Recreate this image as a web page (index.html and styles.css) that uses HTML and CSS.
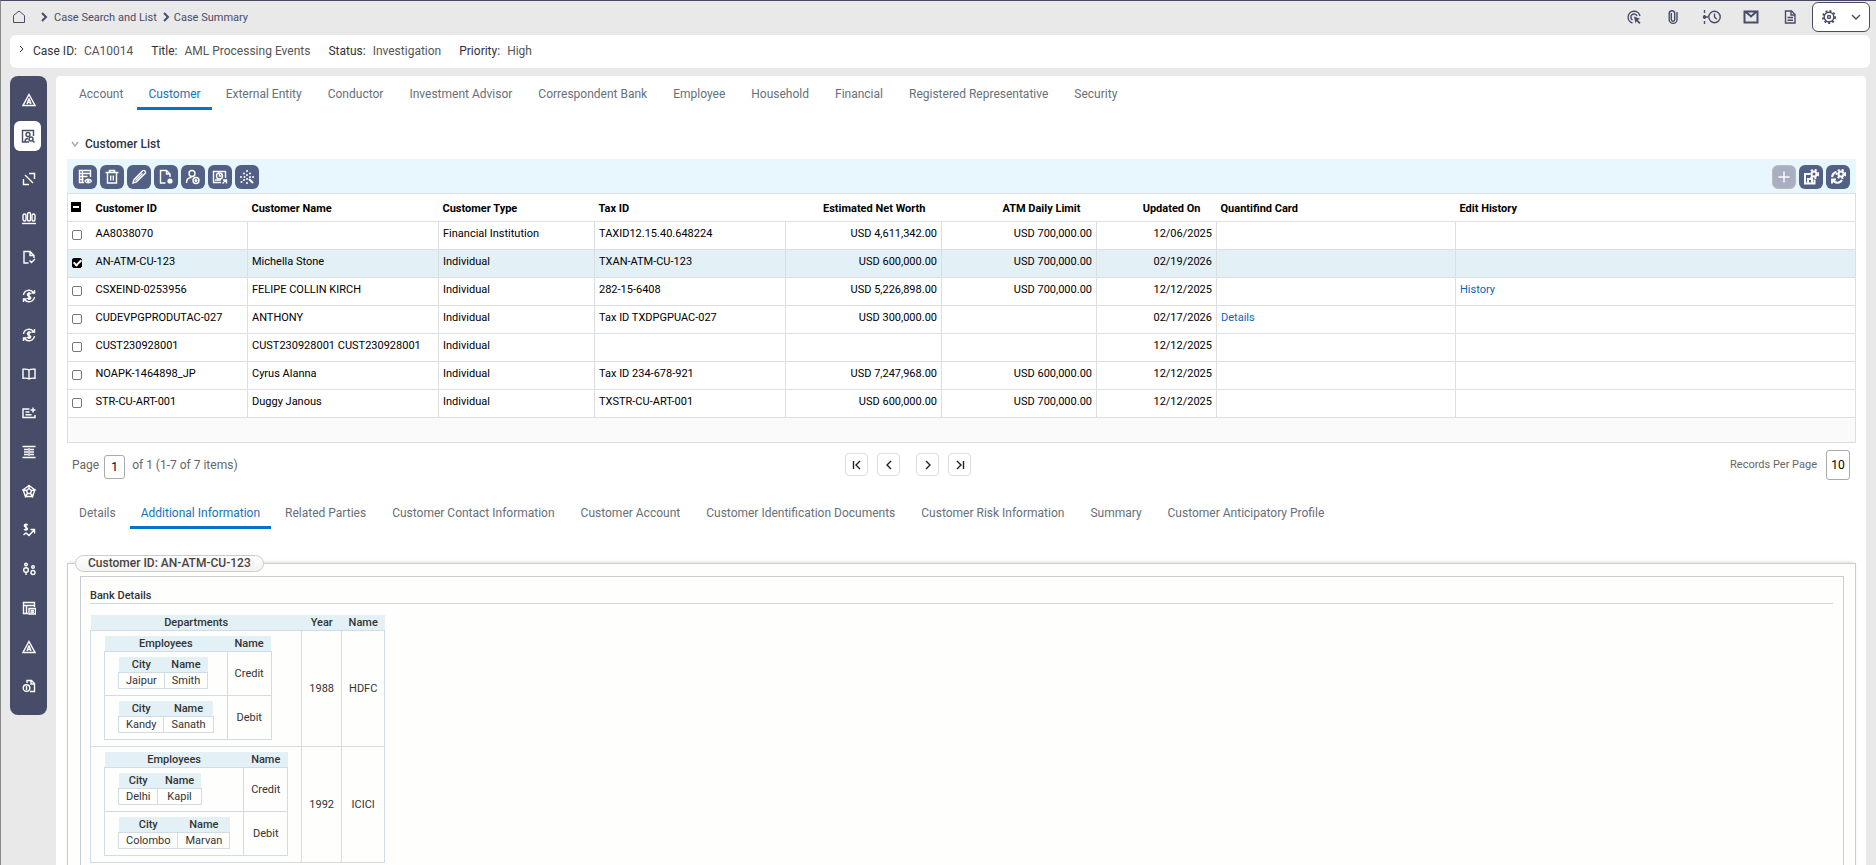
FILE: index.html
```html
<!DOCTYPE html>
<html lang="en">
<head>
  <meta charset="UTF-8">
  <meta name="viewport" content="width=device-width, initial-scale=1.0">
  <title>Case Summary</title>
  <link rel="stylesheet" href="styles.css">
</head>
<body>
<div class="app">

<header class="topbar">
  <nav class="breadcrumb" aria-label="Breadcrumb">
    <a href="#" class="home" aria-label="Home"><svg class="icon" viewBox="0 0 16 16"><path d="M2.500 6.500 8 2l5.500 4.500v7h-11z"/></svg></a>
    <svg class="sep" viewBox="0 0 8 10"><path d="M2 1l4 4-4 4"/></svg>
    <a href="#">Case Search and List</a>
    <svg class="sep" viewBox="0 0 8 10"><path d="M2 1l4 4-4 4"/></svg>
    <a href="#">Case Summary</a>
  </nav>
  <div class="actions">
    <button aria-label="Actions"><svg class="icon" viewBox="0 0 16 16"><path d="M6.500 14A6 6 0 1 1 14 7M6.500 11A3.200 3.200 0 1 1 11 7"/><path class="solid" d="M8 7.500l6 2.300-2.200 1.200 2.700 2.700-1.200 1.300-2.700-2.700L9.500 14.500z"/></svg></button>
    <button aria-label="Attachments"><svg class="icon" viewBox="0 0 16 16"><path d="M6.300 4v6.500a1.700 1.700 0 0 0 3.400 0V4a2.800 2.800 0 0 0-5.500 0v6.500a3.900 3.900 0 0 0 7.800 0V3"/></svg></button>
    <button aria-label="Timeline"><svg class="icon wide" viewBox="0 0 20 16"><path d="M2.500 1v3M2.500 12v3M2.500 6v4M3 8h3"/><circle cx="2.500" cy="8" r="1"/><circle cx="12.500" cy="8" r="5.700"/><path d="M12.500 4.500V8l2.300 2.300"/></svg></button>
    <button aria-label="Mail"><svg class="icon" viewBox="0 0 16 16"><path class="thick" d="M1.500 2.500h13v11h-13zM3 3l5 4.500L13 3"/></svg></button>
    <button aria-label="Documents"><svg class="icon" viewBox="0 0 16 16"><path d="M3.500 2h6l3.500 3.500V14H3.500zM5.500 8.500h5.500M5.500 11.200h5.500"/><path d="M9 2v4h4"/></svg></button>
    <button class="settings" aria-label="Settings">
      <svg class="icon" viewBox="0 0 16 16"><circle cx="8" cy="8" r="4.800"/><circle cx="8" cy="8" r="1.500"/><circle class="teeth" cx="8" cy="8" r="6"/></svg>
      <svg class="caret" viewBox="0 0 10 6"><path d="M1 1l4 4 4-4"/></svg>
    </button>
  </div>
</header>

<section class="case-bar">
  <button class="expand" aria-label="Expand"><svg viewBox="0 0 5 8"><path d="M1 1l3 3-3 3"/></svg></button>
  <dl>
    <div><dt>Case ID:</dt><dd>CA10014</dd></div>
    <div><dt>Title:</dt><dd>AML Processing Events</dd></div>
    <div><dt>Status:</dt><dd>Investigation</dd></div>
    <div><dt>Priority:</dt><dd>High</dd></div>
  </dl>
</section>

<div class="body">
  <nav class="sidebar" aria-label="Case sections">
    <a href="#" aria-label="Alerts"><svg viewBox="0 0 14 14"><path d="M7 1.500 13 12.500H1z"/><path d="M7 5.500 5 11M7 5.500l2 5.500M5.500 9.500h3"/></svg></a>
    <a href="#" class="active" aria-label="Entities"><svg viewBox="0 0 14 14"><path d="M8 13H1.500V1.500h11V7M4 13c0-2 1-3.500 3-3.500"/><circle cx="7" cy="5.500" r="2"/><circle cx="10" cy="10" r="2"/><path d="M11.500 11.500l2 2"/></svg></a>
    <a href="#" aria-label="Transactions"><svg viewBox="0 0 14 14"><path d="M7 1.500h5.500V7M7 12.500H1.500V7M3 3l8 8"/></svg></a>
    <a href="#" aria-label="Network"><svg viewBox="0 0 14 14"><path d="M0 12.500h14"/><rect x="1" y="3" width="3" height="7" rx="1.500"/><rect x="5.500" y="1.500" width="3" height="8.500" rx="1.500"/><rect x="10" y="3" width="3" height="7" rx="1.500"/></svg></a>
    <a href="#" aria-label="Evidence"><svg viewBox="0 0 14 14"><path d="M6.500 13H2V1.500h6l4 4V8M8 1.500v4h4M7.500 10.500l2 2 3.500-3.500"/></svg></a>
    <a href="#" aria-label="Financials"><svg viewBox="0 0 14 14"><path d="M1.500 6a5.600 5.600 0 0 1 10-2.500M12.500 8a5.600 5.600 0 0 1-10 2.500M12.500 1v3h-3M1.500 13v-3h3M9 5C7 3.500 5 4.500 5.500 6S9 7.500 8.700 9 6 10 5 9M7 3v8"/></svg></a>
    <a href="#" aria-label="Recovery"><svg viewBox="0 0 14 14"><path d="M1.500 6a5.600 5.600 0 0 1 10-2.500M12.500 8a5.600 5.600 0 0 1-10 2.500M12.500 1v3h-3M1.500 13v-3h3M9 5C7 3.500 5 4.500 5.500 6S9 7.500 8.700 9 6 10 5 9M7 3v8"/></svg></a>
    <a href="#" aria-label="Narrative"><svg viewBox="0 0 14 14"><path d="M7 3v9M7 3C5.500 2 3 2 1 2.200v9C3 11 5.500 11 7 12c1.500-1 4-1 6-.8v-9C11 2 8.500 2 7 3z"/></svg></a>
    <a href="#" aria-label="Summary"><svg viewBox="0 0 14 14"><path d="M7.500 3H1v8.500h12V9M3.500 6h4M3.500 8.700h6M11 1.500v5M8.500 4h5"/></svg></a>
    <a href="#" aria-label="Lists"><svg viewBox="0 0 14 14"><path d="M.5 1.500h13M.5 12.500h13M2 4.500h4M8 4.500h4M2 7h4M8 7h4M2 9.500h4M8 9.500h4M7 3v8"/></svg></a>
    <a href="#" aria-label="Ratings"><svg viewBox="0 0 14 14"><path d="M7 1.500 12.800 5.800 10.600 12.500H3.400L1.200 5.800zM7 4.500l2.500 2-1 3h-3l-1-3zM7 1.500v3M12.800 5.800l-3.300.7M10.600 12.500l-2-3M3.400 12.500l2-3M1.200 5.800l3.300.7"/><path class="thick" d="M7 1v1M1 5.500v1M13 5.500v1M3 12.500h1M10 12.500h1"/></svg></a>
    <a href="#" aria-label="Trends"><svg viewBox="0 0 14 14"><path d="M6 2C4 .8 2 1.500 2.500 3S6 4.500 5.500 6 3 7 2 6.200M4 .5V7.500M1.500 12l2.500-2 3 2.500L12 7M8.500 6.500H12.500v4"/></svg></a>
    <a href="#" aria-label="Related people"><svg viewBox="0 0 14 14"><circle cx="4" cy="2.500" r="1.300"/><circle cx="4" cy="8" r="2.300"/><path d="M4 10v3"/><circle cx="11" cy="5" r="1.300"/><circle cx="11" cy="10.500" r="2"/></svg></a>
    <a href="#" aria-label="Records"><svg viewBox="0 0 14 14"><path d="M6 12.500H1.500v-11h11V6M1.500 4.500h11M4.500 4.500v8"/><path d="M7 7.500h6.500v5.500H7zM8.500 9.500h3.500M8.500 11.300h3.500"/></svg></a>
    <a href="#" aria-label="Related alerts"><svg viewBox="0 0 14 14"><path d="M7 1.500 13 12.500H1z"/><path d="M7 5.500 5 11M7 5.500l2 5.500M5.500 9.500h3"/></svg></a>
    <a href="#" aria-label="Audit"><svg viewBox="0 0 14 14"><path d="M5 4V1.500h4.500L12.500 4.500v8H8M9 1.500V5h3.500"/><circle cx="4.500" cy="9" r="3.300"/><path d="M4.500 7v4"/></svg></a>
  </nav>

  <main class="panel">
    <nav class="tabs" aria-label="Entity types">
      <a href="#">Account</a>
      <a href="#" class="active">Customer</a>
      <a href="#">External Entity</a>
      <a href="#">Conductor</a>
      <a href="#">Investment Advisor</a>
      <a href="#">Correspondent Bank</a>
      <a href="#">Employee</a>
      <a href="#">Household</a>
      <a href="#">Financial</a>
      <a href="#">Registered Representative</a>
      <a href="#">Security</a>
    </nav>

    <h2 class="list-title"><svg viewBox="0 0 8 6"><path d="M1 1l3 4 3-4"/></svg>Customer List</h2>

    <div class="toolbar">
      <button aria-label="View"><svg viewBox="0 0 16 16"><path d="M7 13.500H2.500v-12h11V8M2.500 4.500h11M2.500 7.500h8M2.500 10.500h4M5.500 2v11"/><path d="M8 12c1.500-2.500 5-2.500 6.500 0-1.500 2.500-5 2.500-6.500 0z"/><circle cx="11.200" cy="12" r=".8"/></svg></button>
      <button aria-label="Delete"><svg viewBox="0 0 16 16"><path d="M1.500 3.500h13M5.500 3.500V1.500h5v2M3.500 4v10h9V4M6.700 6.500v5M9.300 6.500v5"/></svg></button>
      <button aria-label="Edit"><svg viewBox="0 0 16 16"><path d="M2 14l1-3.500L11.500 2a1.700 1.700 0 0 1 2.500 2.500L5.500 13zM4.500 11.500l7-7"/></svg></button>
      <button aria-label="Add document"><svg viewBox="0 0 16 16"><path d="M7.500 14H2.500V1.500h6L12 5v3M8.500 1.500V5H12"/><circle class="solid" cx="12" cy="12" r="2.600"/></svg></button>
      <button aria-label="Link customer"><svg viewBox="0 0 16 16"><circle cx="7" cy="4.500" r="3"/><path d="M1.500 14c0-3.500 2-5.500 5-5.500"/><circle cx="11" cy="11.500" r="3"/><path d="M9.500 11.500h3M11 10v3"/></svg></button>
      <button aria-label="Open profile"><svg viewBox="0 0 16 16"><path d="M9 13.500H1.500v-11h12V9M3 11h6"/><circle cx="7.500" cy="7" r="3"/><path d="M7.500 5v2h2M10.500 14.500l3.500-3.500M11 11h3.500v3.500"/></svg></button>
      <button aria-label="Network graph"><svg viewBox="0 0 16 16"><path class="dots" d="M8 2v.1M5 4.500v.1M11 4.500v.1M2 8v.1M5.500 8v.1M8 6v.1M11 8v.1M14 8v.1M5 11v.1M8 10v.1M8 14v.1M2.500 13v.1"/><path class="thick" d="M10 10l4 4"/></svg></button>
      <span class="spacer"></span>
      <button class="disabled" disabled aria-label="Add"><svg viewBox="0 0 16 16"><path d="M8 2.500v11M2.500 8h11"/></svg></button>
      <button aria-label="Save settings"><svg viewBox="0 0 16 16"><path class="thick" d="M6 5H2v9.500h9.500V10.500M5 14v-4h4v4"/><circle class="thick" cx="11" cy="5" r="2.500"/><circle class="teeth" cx="11" cy="5" r="4.200"/></svg></button>
      <button aria-label="Refresh settings"><svg viewBox="0 0 16 16"><path class="thick" d="M2 8c.5-3 2-4.500 4.500-5M12 11c-2 3.500-6.500 3.500-9 .5M2 14.500v-4h4"/><circle class="thick" cx="11" cy="5" r="2.500"/><circle class="teeth" cx="11" cy="5" r="4.200"/></svg></button>
    </div>

    <table class="grid">
      <colgroup>
        <col class="c-check"><col class="c-id"><col class="c-name"><col class="c-type"><col class="c-tax">
        <col class="c-worth"><col class="c-limit"><col class="c-date"><col class="c-card"><col>
      </colgroup>
      <thead>
        <tr>
          <th><input type="checkbox" class="mixed" aria-label="Select all"></th>
          <th>Customer ID</th><th>Customer Name</th><th>Customer Type</th><th>Tax ID</th>
          <th class="num">Estimated Net Worth</th><th class="num">ATM Daily Limit</th><th class="num">Updated On</th>
          <th>Quantifind Card</th><th>Edit History</th>
        </tr>
      </thead>
      <tbody>
        <tr>
          <td><input type="checkbox" aria-label="Select AA8038070"></td>
          <td>AA8038070</td><td></td><td>Financial Institution</td><td>TAXID12.15.40.648224</td>
          <td class="num">USD 4,611,342.00</td><td class="num">USD 700,000.00</td><td class="num">12/06/2025</td><td></td><td></td>
        </tr>
        <tr class="selected">
          <td><input type="checkbox" checked aria-label="Select AN-ATM-CU-123"></td>
          <td>AN-ATM-CU-123</td><td>Michella Stone</td><td>Individual</td><td>TXAN-ATM-CU-123</td>
          <td class="num">USD 600,000.00</td><td class="num">USD 700,000.00</td><td class="num">02/19/2026</td><td></td><td></td>
        </tr>
        <tr>
          <td><input type="checkbox" aria-label="Select CSXEIND-0253956"></td>
          <td>CSXEIND-0253956</td><td>FELIPE COLLIN KIRCH</td><td>Individual</td><td>282-15-6408</td>
          <td class="num">USD 5,226,898.00</td><td class="num">USD 700,000.00</td><td class="num">12/12/2025</td><td></td><td><a href="#">History</a></td>
        </tr>
        <tr>
          <td><input type="checkbox" aria-label="Select CUDEVPGPRODUTAC-027"></td>
          <td>CUDEVPGPRODUTAC-027</td><td>ANTHONY</td><td>Individual</td><td>Tax ID TXDPGPUAC-027</td>
          <td class="num">USD 300,000.00</td><td></td><td class="num">02/17/2026</td><td><a href="#">Details</a></td><td></td>
        </tr>
        <tr>
          <td><input type="checkbox" aria-label="Select CUST230928001"></td>
          <td>CUST230928001</td><td>CUST230928001 CUST230928001</td><td>Individual</td><td></td>
          <td></td><td></td><td class="num">12/12/2025</td><td></td><td></td>
        </tr>
        <tr>
          <td><input type="checkbox" aria-label="Select NOAPK-1464898_JP"></td>
          <td>NOAPK-1464898_JP</td><td>Cyrus Alanna</td><td>Individual</td><td>Tax ID 234-678-921</td>
          <td class="num">USD 7,247,968.00</td><td class="num">USD 600,000.00</td><td class="num">12/12/2025</td><td></td><td></td>
        </tr>
        <tr>
          <td><input type="checkbox" aria-label="Select STR-CU-ART-001"></td>
          <td>STR-CU-ART-001</td><td>Duggy Janous</td><td>Individual</td><td>TXSTR-CU-ART-001</td>
          <td class="num">USD 600,000.00</td><td class="num">USD 700,000.00</td><td class="num">12/12/2025</td><td></td><td></td>
        </tr>
      </tbody>
    </table>
    <div class="grid-foot"></div>

    <div class="pager">
      <div class="page-no">
        <label for="page">Page</label>
        <input id="page" type="text" value="1">
        <span>of 1 (1-7 of 7 items)</span>
      </div>
      <div class="page-nav">
        <button aria-label="First page"><svg viewBox="0 0 10 10"><path d="M1.500 1v8M8 1L4 5l4 4"/></svg></button>
        <button aria-label="Previous page"><svg viewBox="0 0 10 10"><path d="M7 1L3 5l4 4"/></svg></button>
        <button class="next" aria-label="Next page"><svg viewBox="0 0 10 10"><path d="M3 1l4 4-4 4"/></svg></button>
        <button aria-label="Last page"><svg viewBox="0 0 10 10"><path d="M2 1l4 4-4 4M8.500 1v8"/></svg></button>
      </div>
      <div class="per-page">
        <label for="perPage">Records Per Page</label>
        <input id="perPage" type="text" value="10">
      </div>
    </div>

    <nav class="tabs sub" aria-label="Customer sections">
      <a href="#">Details</a>
      <a href="#" class="active">Additional Information</a>
      <a href="#">Related Parties</a>
      <a href="#">Customer Contact Information</a>
      <a href="#">Customer Account</a>
      <a href="#">Customer Identification Documents</a>
      <a href="#">Customer Risk Information</a>
      <a href="#">Summary</a>
      <a href="#">Customer Anticipatory Profile</a>
    </nav>

    <fieldset class="customer-box">
      <legend>Customer ID: AN-ATM-CU-123</legend>
      <section class="bank">
        <h3>Bank Details</h3>
        <table class="nested">
          <tr><th>Departments</th><th>Year</th><th>Name</th></tr>
          <tr>
            <td class="holder">
              <table class="nested">
                <tr><th>Employees</th><th>Name</th></tr>
                <tr>
                  <td class="holder">
                    <table class="nested">
                      <tr><th>City</th><th>Name</th></tr>
                      <tr><td>Jaipur</td><td>Smith</td></tr>
                    </table>
                  </td>
                  <td>Credit</td>
                </tr>
                <tr>
                  <td class="holder">
                    <table class="nested">
                      <tr><th>City</th><th>Name</th></tr>
                      <tr><td>Kandy</td><td>Sanath</td></tr>
                    </table>
                  </td>
                  <td>Debit</td>
                </tr>
              </table>
            </td>
            <td>1988</td>
            <td>HDFC</td>
          </tr>
          <tr>
            <td class="holder">
              <table class="nested">
                <tr><th>Employees</th><th>Name</th></tr>
                <tr>
                  <td class="holder">
                    <table class="nested">
                      <tr><th>City</th><th>Name</th></tr>
                      <tr><td>Delhi</td><td>Kapil</td></tr>
                    </table>
                  </td>
                  <td>Credit</td>
                </tr>
                <tr>
                  <td class="holder">
                    <table class="nested">
                      <tr><th>City</th><th>Name</th></tr>
                      <tr><td>Colombo</td><td>Marvan</td></tr>
                    </table>
                  </td>
                  <td>Debit</td>
                </tr>
              </table>
            </td>
            <td>1992</td>
            <td>ICICI</td>
          </tr>
        </table>
      </section>
    </fieldset>
  </main>
</div>

</div>
</body>
</html>
```
FILE: styles.css
```css
* {
  box-sizing: border-box;
}

body {
  margin: 0;
  font-family: Roboto, 'Open Sans', sans-serif;
  font-size: 12px;
  color: #333;
  background: #e9e9e9;
}

a {
  color: inherit;
  text-decoration: none;
}

button {
  padding: 0;
  border: none;
  background: none;
  color: inherit;
  font: inherit;
  cursor: pointer;
}

svg {
  display: block;
  fill: none;
  stroke: currentColor;
  stroke-width: 1.4;
}

svg .solid {
  fill: currentColor;
  stroke: none;
}

svg .thick {
  stroke-width: 2;
}

svg .teeth {
  stroke-width: 2;
  stroke-dasharray: 2 2;
}

svg .dots {
  stroke-width: 2;
  stroke-linecap: round;
}

.app {
  display: flex;
  flex-direction: column;
  height: 100vh;
  overflow: hidden;
  border-top: 1px solid #474864;
  border-left: 1px solid #8a8a8a;
}

/* top bar */
.topbar {
  display: flex;
  align-items: center;
  justify-content: space-between;
  height: 34px;
  flex-shrink: 0;
  padding: 0 6px 2px 10px;
  color: #474c69;
}

.breadcrumb {
  display: flex;
  align-items: center;
  font-size: 11px;
}

.breadcrumb .sep {
  width: 8px;
  height: 10px;
  margin: 0 4px 0 5px;
  stroke-width: 2;
}

.breadcrumb .home + .sep {
  margin: 0 6px 0 13px;
}

.home svg {
  stroke-width: 1;
}

.icon {
  width: 16px;
  height: 16px;
}

.icon.wide {
  width: 20px;
}

.actions {
  display: flex;
  align-items: center;
}

.actions button {
  display: flex;
  justify-content: center;
  width: 39px;
}

.actions .settings {
  align-items: center;
  justify-content: space-between;
  width: 58px;
  height: 30px;
  margin-left: 3px;
  padding: 0 8px;
  border: 1px solid #474c69;
  border-radius: 6px;
  background: #fff;
}

.caret {
  width: 10px;
  height: 6px;
}

/* case bar */
.case-bar {
  display: flex;
  align-items: center;
  height: 33px;
  flex-shrink: 0;
  margin: 0 6px 8px 9px;
  padding: 0 0 1px 9px;
  border-radius: 6px;
  background: #fff;
}

.expand {
  margin: 0 9px 5px 0;
}

.expand svg {
  width: 5px;
  height: 8px;
  stroke-width: 1;
}

.case-bar dl {
  display: flex;
  gap: 18px;
  margin: 0;
}

.case-bar dl div {
  display: flex;
  gap: 7px;
}

.case-bar dd {
  margin: 0;
  color: #555;
}

/* body */
.body {
  display: flex;
  align-items: flex-start;
  flex: 1;
  min-height: 0;
  gap: 9px;
  padding: 0 10px 0 9px;
}

.sidebar {
  display: flex;
  flex-direction: column;
  width: 37px;
  padding: 4px 0 10px;
  border-radius: 8px;
  background: #474c69;
  color: #fff;
}

.sidebar a {
  display: flex;
  align-items: center;
  justify-content: center;
  height: 39px;
}

.sidebar svg {
  width: 14px;
  height: 14px;
}

.sidebar .active {
  height: 30px;
  margin: 2px 6px 8px 4px;
  border-radius: 6px;
  background: #fff;
  color: #474c69;
}

.panel {
  flex: 1;
  align-self: stretch;
  min-width: 0;
  overflow: auto;
  scrollbar-width: none;
  padding: 0 10px 20px 11px;
  border-radius: 4px 4px 0 0;
  background: #fff;
}

/* tabs */
.tabs {
  display: flex;
  gap: 3px;
}

.tabs a {
  height: 34px;
  padding: 0 11px;
  line-height: 36px;
  color: #677078;
}

.tabs a:first-child {
  padding-left: 12px;
}

.tabs a:nth-child(n + 3) {
  padding-right: 12px;
}

.tabs .active {
  color: #1672c0;
  border-bottom: 3px solid #0572ce;
}

.list-title {
  display: flex;
  align-items: center;
  gap: 6px;
  height: 30px;
  margin: 19px 0 0;
  padding-left: 4px;
  font-size: 12px;
  font-weight: 500;
  color: #2f3446;
}

.list-title svg {
  width: 8px;
  height: 6px;
  color: #aaa;
}

/* customer table */
.toolbar {
  display: flex;
  align-items: center;
  gap: 3px;
  height: 34px;
  padding: 2px 6px 0;
  background: #e8f6fe;
}

.toolbar button {
  display: flex;
  align-items: center;
  justify-content: center;
  width: 24px;
  height: 24px;
  border-radius: 6px;
  background: #536086;
  color: #fff;
}

.toolbar svg {
  width: 16px;
  height: 16px;
}

.toolbar .disabled {
  border: 1px solid #bbb;
  background: #a9aec3;
}

.spacer {
  flex: 1;
}

.grid {
  width: 100%;
  table-layout: fixed;
  border-collapse: collapse;
  font-size: 11px;
  color: #000;
}

.c-check { width: 25px; }
.c-id { width: 155px; }
.c-name { width: 191px; }
.c-type { width: 156px; }
.c-tax { width: 191px; }
.c-worth { width: 156px; }
.c-limit { width: 155px; }
.c-date { width: 120px; }
.c-card { width: 239px; }

.grid thead {
  border: 1px solid #dcdfe1;
}

.grid th {
  height: 28px;
  padding: 2px 4px 0;
  font-weight: 700;
  text-align: left;
}

.grid td {
  height: 28px;
  padding: 0 4px 4px;
  border: 1px solid #dcdfe1;
  white-space: nowrap;
}

.grid td:first-child {
  padding: 0 4px 2px;
  border-right: none;
}

.grid td:nth-child(2),
.grid th:nth-child(2) {
  border-left: none;
  padding-left: 3px;
}

.grid th:first-child {
  padding: 0 3px 2px;
}

.grid .num {
  text-align: right;
}

.grid th.num {
  padding-right: 16px;
}

.grid a {
  color: #0a66b7;
}

.grid .selected {
  background: #e3f0f6;
}

.grid input {
  display: grid;
  place-content: center;
  appearance: none;
  width: 10px;
  height: 10px;
  margin: 0;
  border: 1px solid #777;
  border-radius: 2px;
  background: #fff;
}

.grid input:checked,
.grid .mixed {
  border-color: #000;
  background: #000;
}

.grid .mixed {
  border-radius: 0;
}

.grid input:checked::before {
  content: "";
  width: 3px;
  height: 6px;
  margin-bottom: 2px;
  border: solid #fff;
  border-width: 0 2px 2px 0;
  transform: rotate(45deg);
}

.grid .mixed::before {
  content: "";
  width: 6px;
  height: 2px;
  background: #fff;
}

.grid-foot {
  height: 25px;
  border: 1px solid #dcdfe1;
  border-top: none;
  background: #fafafa;
}

/* paging */
.pager {
  display: grid;
  grid-template-columns: 1fr auto 1fr;
  align-items: center;
  height: 43px;
  padding: 0 6px 0 5px;
  color: #666;
}

.page-no,
.page-nav,
.per-page {
  display: flex;
  align-items: center;
}

.pager input {
  width: 21px;
  height: 24px;
  margin: 4px 7px 0 5px;
  padding: 0;
  border: 1px solid #aaa;
  border-radius: 3px;
  font: inherit;
  color: #000;
  text-align: center;
}

.page-nav {
  gap: 9px;
  margin-right: 106px;
}

.page-nav button {
  display: flex;
  align-items: center;
  justify-content: center;
  width: 23px;
  height: 23px;
  border: 1px solid #ddd;
  border-radius: 4px;
  color: #222;
}

.page-nav .next {
  margin-left: 7px;
}

.page-nav svg {
  width: 10px;
  height: 10px;
}

.per-page {
  justify-content: flex-end;
  font-size: 11px;
}

.pager .per-page input {
  width: 24px;
  height: 30px;
  margin: 0 0 0 9px;
  font-size: 12px;
}

.tabs.sub {
  margin-top: 9px;
}

/* customer details */
.customer-box {
  min-width: 0;
  margin: 26px 0 0;
  padding: 4px 11px 12px 12px;
  border: 1px solid #ccc;
  background: #fefefc;
  box-shadow: 0 -2px 4px -2px #ccc;
}

.customer-box legend {
  margin-left: -5px;
  padding: 0 12px;
  border: 1px solid #ccc;
  border-radius: 9px;
  background: linear-gradient(#fff, #f2f2f2);
  font-weight: 500;
  line-height: 15px;
  color: #4a4340;
}

.bank {
  padding: 12px 10px 12px 9px;
  border: 1px solid #c8cdd1;
}

.bank h3 {
  margin: 0 0 11px;
  border-bottom: 1px solid #d2d9de;
  font-size: 11px;
  font-weight: 500;
  line-height: 14px;
}

.nested {
  border-collapse: collapse;
  font-size: 11px;
  line-height: 15px;
  text-align: center;
}

.nested th {
  padding: 0 7px;
  background: #e3f1f7;
  font-weight: 500;
}

.nested td {
  padding: 0 7px;
  border: 1px solid #d2dce4;
}

.nested td.holder {
  padding: 5px 13px 6px;
}
```
